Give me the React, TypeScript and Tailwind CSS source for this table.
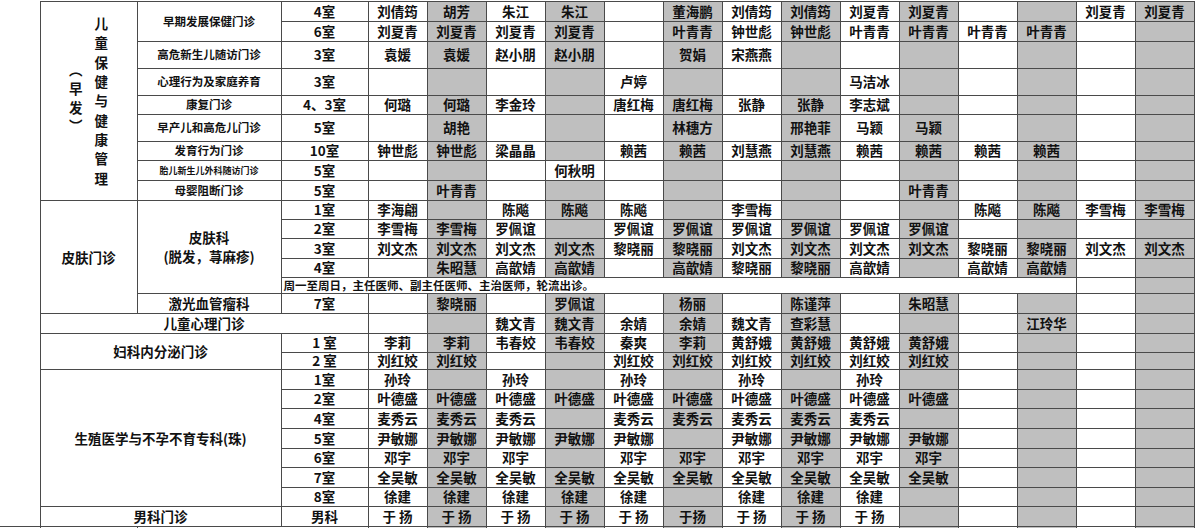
import React from "react";

const FONT = "font-['Noto_Sans_CJK_SC','Noto_Sans',sans-serif]";
const BORDER = "border border-[#4a4a4a]";
const BIG = "text-[13.5px]";
const SUB = "text-[11.5px]";

function pad(names: string[]): string[] {
  const out = [...names];
  while (out.length < 14) out.push("");
  return out;
}

function NameCells({ names, start = 0, white = [] }: { names: string[]; start?: number; white?: number[] }) {
  const list = pad(names);
  return (
    <>
      {list.slice(start).map((n, k) => {
        const i = k + start;
        const gray = i % 2 === 1 && !white.includes(i);
        return (
          <td
            key={i}
            className={`${BORDER} ${gray ? "bg-[#bfbfbf]" : "bg-white"} p-0 text-center align-middle whitespace-nowrap ${BIG} leading-none`}
          >
            {n}
          </td>
        );
      })}
    </>
  );
}

function Room({ children, colSpan = 1 }: { children: React.ReactNode; colSpan?: number }) {
  return (
    <td colSpan={colSpan} className={`${BORDER} bg-white p-0 text-center align-middle whitespace-nowrap ${BIG} leading-none`}>
      {children}
    </td>
  );
}

function Sub({ children, rowSpan = 1, small = false }: { children: React.ReactNode; rowSpan?: number; small?: boolean }) {
  return (
    <td
      rowSpan={rowSpan}
      className={`${BORDER} bg-white p-0 text-center align-middle whitespace-nowrap leading-none ${small ? "text-[9px]" : SUB}`}
    >
      {children}
    </td>
  );
}

function Big({ children, rowSpan = 1, colSpan = 1 }: { children: React.ReactNode; rowSpan?: number; colSpan?: number }) {
  return (
    <td
      rowSpan={rowSpan}
      colSpan={colSpan}
      className={`${BORDER} bg-white p-0 text-center align-middle whitespace-nowrap ${BIG} leading-[19px]`}
    >
      {children}
    </td>
  );
}

const mainChars = ["儿", "童", "保", "健", "与", "健", "康", "管", "理"];

export default function App() {
  return (
    <div className={`w-[1200px] h-[528px] overflow-hidden bg-white text-[#111] font-bold ${FONT}`}>
      <table className="table-fixed border-collapse mt-px w-[1194px]">
        <colgroup>
          <col className="w-[40px]" />
          <col className="w-[97px]" />
          <col className="w-[144px]" />
          <col className="w-[87px]" />
          <col className="w-[59px]" />
          <col className="w-[59px]" />
          <col className="w-[59px]" />
          <col className="w-[59px]" />
          <col className="w-[59px]" />
          <col className="w-[59px]" />
          <col className="w-[59px]" />
          <col className="w-[59px]" />
          <col className="w-[59px]" />
          <col className="w-[59px]" />
          <col className="w-[59px]" />
          <col className="w-[59px]" />
          <col className="w-[59px]" />
          <col className="w-[59px]" />
        </colgroup>
        <tbody>
          {/* 儿童保健与健康管理 */}
          <tr className="h-[20px]">
            <td rowSpan={26} className="p-0 border-0"></td>
            <td rowSpan={9} className={`${BORDER} bg-white p-0 align-middle`}>
              <div className="flex flex-row items-center justify-center gap-[12px]">
                <div className="flex flex-col items-center mb-[8px] text-[13.5px]">
                  <div className="h-[19px] leading-[19px]">︵</div>
                  <div className="h-[19px] leading-[19px]">早</div>
                  <div className="h-[19px] leading-[19px]">发</div>
                  <div className="h-[16px] leading-[16px]">︶</div>
                </div>
                <div className="flex flex-col items-center text-[13.5px]">
                  {mainChars.map((c, i) => (
                    <div key={i} className="h-[19.4px] leading-[19.4px]">
                      {c}
                    </div>
                  ))}
                </div>
              </div>
            </td>
            <Sub rowSpan={2}>早期发展保健门诊</Sub>
            <Room>4室</Room>
            <NameCells names={["刘倩筠", "胡芳", "朱江", "朱江", "", "董海鹏", "刘倩筠", "刘倩筠", "刘夏青", "刘夏青", "", "", "刘夏青", "刘夏青"]} />
          </tr>
          <tr className="h-[20px]">
            <Room>6室</Room>
            <NameCells names={["刘夏青", "刘夏青", "刘夏青", "刘夏青", "", "叶青青", "钟世彪", "钟世彪", "叶青青", "叶青青", "叶青青", "叶青青"]} />
          </tr>
          <tr className="h-[27px]">
            <Sub>高危新生儿随访门诊</Sub>
            <Room>3室</Room>
            <NameCells names={["袁媛", "袁媛", "赵小朋", "赵小朋", "", "贺娟", "宋燕燕"]} />
          </tr>
          <tr className="h-[27px]">
            <Sub>心理行为及家庭养育</Sub>
            <Room>3室</Room>
            <NameCells names={["", "", "", "", "卢婷", "", "", "", "马洁冰"]} />
          </tr>
          <tr className="h-[19px]">
            <Sub>康复门诊</Sub>
            <Room>4、3室</Room>
            <NameCells names={["何璐", "何璐", "李金玲", "", "唐红梅", "唐红梅", "张静", "张静", "李志斌"]} />
          </tr>
          <tr className="h-[27px]">
            <Sub>早产儿和高危儿门诊</Sub>
            <Room>5室</Room>
            <NameCells names={["", "胡艳", "", "", "", "林穗方", "", "邢艳菲", "马颖", "马颖"]} />
          </tr>
          <tr className="h-[19px]">
            <Sub>发育行为门诊</Sub>
            <Room>10室</Room>
            <NameCells names={["钟世彪", "钟世彪", "梁晶晶", "", "赖茜", "赖茜", "刘慧燕", "刘慧燕", "赖茜", "赖茜", "赖茜", "赖茜"]} />
          </tr>
          <tr className="h-[20px]">
            <Sub small>胎儿新生儿外科随访门诊</Sub>
            <Room>5室</Room>
            <NameCells names={["", "", "", "何秋明"]} white={[3]} />
          </tr>
          <tr className="h-[20px]">
            <Sub>母婴阻断门诊</Sub>
            <Room>5室</Room>
            <NameCells names={["", "叶青青", "", "", "", "", "", "", "", "叶青青"]} />
          </tr>

          {/* 皮肤门诊 */}
          <tr className="h-[19px]">
            <Big rowSpan={6}>皮肤门诊</Big>
            <Big rowSpan={5}>
              <div>皮肤科</div>
              <div>(脱发，荨麻疹)</div>
            </Big>
            <Room>1室</Room>
            <NameCells names={["李海翩", "", "陈飚", "陈飚", "陈飚", "", "李雪梅", "", "", "", "陈飚", "陈飚", "李雪梅", "李雪梅"]} />
          </tr>
          <tr className="h-[19px]">
            <Room>2室</Room>
            <NameCells names={["李雪梅", "李雪梅", "罗佩谊", "", "罗佩谊", "罗佩谊", "罗佩谊", "罗佩谊", "罗佩谊", "罗佩谊"]} />
          </tr>
          <tr className="h-[20px]">
            <Room>3室</Room>
            <NameCells names={["刘文杰", "刘文杰", "刘文杰", "刘文杰", "黎晓丽", "黎晓丽", "刘文杰", "刘文杰", "刘文杰", "刘文杰", "黎晓丽", "黎晓丽", "刘文杰", "刘文杰"]} />
          </tr>
          <tr className="h-[19px]">
            <Room>4室</Room>
            <NameCells names={["", "朱昭慧", "高歆婧", "高歆婧", "", "高歆婧", "黎晓丽", "黎晓丽", "高歆婧", "", "高歆婧", "高歆婧"]} />
          </tr>
          <tr className="h-[16px]">
            <td colSpan={13} className={`${BORDER} bg-white p-0 pl-[2px] text-left align-middle whitespace-nowrap ${SUB} leading-none`}>
              周一至周日，主任医师、副主任医师、主治医师，轮流出诊。
            </td>
            <NameCells names={[]} start={12} />
          </tr>
          <tr className="h-[20px]">
            <Big>激光血管瘤科</Big>
            <Room>7室</Room>
            <NameCells names={["", "黎晓丽", "", "罗佩谊", "", "杨丽", "", "陈谨萍", "", "朱昭慧"]} />
          </tr>

          {/* 儿童心理门诊 */}
          <tr className="h-[19px]">
            <Big colSpan={3}>儿童心理门诊</Big>
            <NameCells names={["", "", "魏文青", "魏文青", "余婧", "余婧", "魏文青", "查彩慧", "", "", "", "江玲华"]} />
          </tr>

          {/* 妇科内分泌门诊 */}
          <tr className="h-[19px]">
            <Big rowSpan={2} colSpan={2}>妇科内分泌门诊</Big>
            <Room>1 室</Room>
            <NameCells names={["李莉", "李莉", "韦春姣", "韦春姣", "秦爽", "李莉", "黄舒娥", "黄舒娥", "黄舒娥", "黄舒娥"]} />
          </tr>
          <tr className="h-[17px]">
            <Room>2 室</Room>
            <NameCells names={["刘红姣", "刘红姣", "", "", "刘红姣", "刘红姣", "刘红姣", "刘红姣", "刘红姣", "刘红姣"]} />
          </tr>

          {/* 生殖医学 */}
          <tr className="h-[20px]">
            <Big rowSpan={7} colSpan={2}>生殖医学与不孕不育专科(珠)</Big>
            <Room>1室</Room>
            <NameCells names={["孙玲", "", "孙玲", "", "孙玲", "", "孙玲", "", "孙玲"]} />
          </tr>
          <tr className="h-[19px]">
            <Room>2室</Room>
            <NameCells names={["叶德盛", "叶德盛", "叶德盛", "叶德盛", "叶德盛", "叶德盛", "叶德盛", "叶德盛", "叶德盛", "叶德盛"]} />
          </tr>
          <tr className="h-[20px]">
            <Room>4室</Room>
            <NameCells names={["麦秀云", "麦秀云", "麦秀云", "", "麦秀云", "麦秀云", "麦秀云", "麦秀云", "麦秀云"]} />
          </tr>
          <tr className="h-[20px]">
            <Room>5室</Room>
            <NameCells names={["尹敏娜", "尹敏娜", "尹敏娜", "尹敏娜", "尹敏娜", "", "尹敏娜", "尹敏娜", "尹敏娜", "尹敏娜"]} />
          </tr>
          <tr className="h-[19px]">
            <Room>6室</Room>
            <NameCells names={["邓宇", "邓宇", "邓宇", "", "邓宇", "邓宇", "邓宇", "邓宇", "邓宇", "邓宇"]} />
          </tr>
          <tr className="h-[20px]">
            <Room>7室</Room>
            <NameCells names={["全吴敏", "全吴敏", "全吴敏", "全吴敏", "全吴敏", "全吴敏", "全吴敏", "全吴敏", "全吴敏", "全吴敏"]} />
          </tr>
          <tr className="h-[19px]">
            <Room>8室</Room>
            <NameCells names={["徐建", "徐建", "徐建", "徐建", "徐建", "", "徐建", "徐建", "徐建"]} />
          </tr>

          {/* 男科门诊 */}
          <tr className="h-[18px]">
            <Big colSpan={2}>男科门诊</Big>
            <Room>男科</Room>
            <NameCells names={["于 扬", "于 扬", "于 扬", "于 扬", "于 扬", "于扬", "于 扬", "于 扬", "于 扬"]} />
          </tr>

          {/* partial next row */}
          <tr className="h-[20px]">
            <td className="p-0 border-0 border-t border-t-[#4a4a4a]"></td>
            <td className={`${BORDER} bg-white p-0`}></td>
            <Room colSpan={2}>{""}</Room>
            <NameCells names={[]} />
          </tr>
        </tbody>
      </table>
    </div>
  );
}
